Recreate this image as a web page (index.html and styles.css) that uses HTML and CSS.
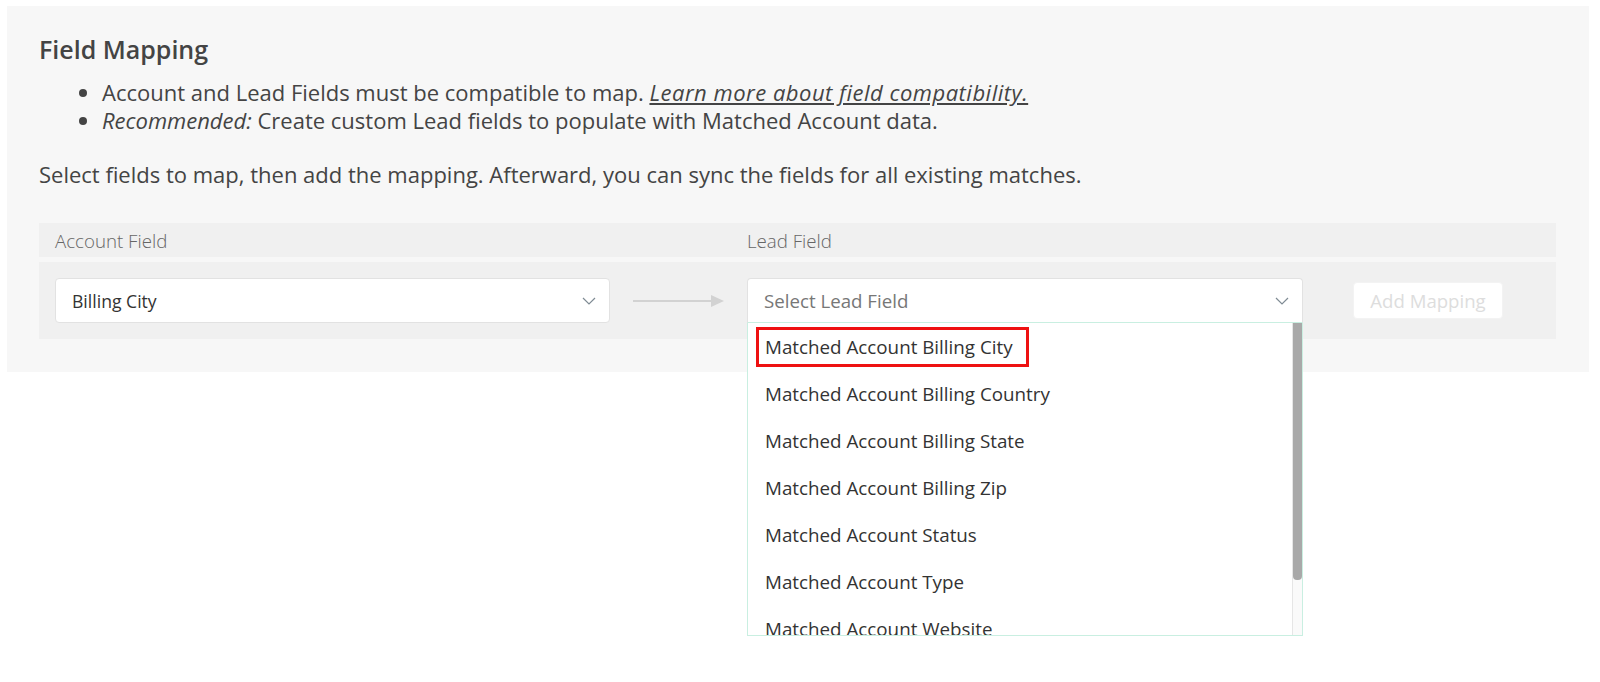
FILE: index.html
```html
<!DOCTYPE html>
<html lang="en">
<head>
    <meta charset="UTF-8">
    <meta name="viewport" content="width=device-width, initial-scale=1.0">
    <title>Field Mapping</title>
    <link rel="stylesheet" href="styles.css">
</head>
<body>
    <div class="panel">
        <h2 class="title">Field Mapping</h2>
        <ul class="notes">
            <li>Account and Lead Fields must be compatible to map. <a href="#" class="help-link">Learn more about field compatibility.</a></li>
            <li><em>Recommended:</em> Create custom Lead fields to populate with Matched Account data.</li>
        </ul>
        <p class="intro">Select fields to map, then add the mapping. Afterward, you can sync the fields for all existing matches.</p>

        <div class="mapping">
            <div class="mapping-head">
                <span class="col-label">Account Field</span>
                <span></span>
                <span class="col-label">Lead Field</span>
            </div>
            <div class="mapping-row">
                <div class="select">
                    <span class="select-value">Billing City</span>
                    <svg class="chevron" width="14" height="8" viewBox="0 0 14 8"><path d="M1 1l6 6 6-6" fill="none" stroke="#7f8b94" stroke-width="1.2"/></svg>
                </div>
                <div class="arrow">
                    <svg width="92" height="12" viewBox="0 0 92 12"><path d="M0 6h80" stroke="#d2d2d2" stroke-width="2"/><path d="M78 0l13 6-13 6z" fill="#d2d2d2"/></svg>
                </div>
                <div class="select select-open">
                    <span class="select-placeholder">Select Lead Field</span>
                    <svg class="chevron" width="14" height="8" viewBox="0 0 14 8"><path d="M1 1l6 6 6-6" fill="none" stroke="#7f8b94" stroke-width="1.2"/></svg>
                    <div class="menu">
                        <ul class="options">
                            <li class="option"><span class="marked">Matched Account Billing City</span></li>
                            <li class="option">Matched Account Billing Country</li>
                            <li class="option">Matched Account Billing State</li>
                            <li class="option">Matched Account Billing Zip</li>
                            <li class="option">Matched Account Status</li>
                            <li class="option">Matched Account Type</li>
                            <li class="option">Matched Account Website</li>
                        </ul>
                        <div class="scrollbar"><div class="thumb"></div></div>
                    </div>
                </div>
                <button class="add-btn" disabled>Add Mapping</button>
            </div>
        </div>
    </div>
</body>
</html>
```

FILE: styles.css
```css
html, body {
    min-height: 100%;
}

body {
    margin: 0;
    min-height: 682px;
    background-color: #fff;
    font-family: "Open Sans", Arial, sans-serif;
    color: #444;
}

.panel {
    margin: 6px 11px 0 7px;
    padding: 26px 33px 33px 32px;
    background-color: #f7f7f7;
}

.title {
    margin: 0;
    font-size: 25px;
    font-weight: 600;
    line-height: 34px;
    color: #444;
}

.notes {
    margin: 13px 0 0;
    padding-left: 63px;
    font-size: 22px;
    line-height: 27.5px;
}

.help-link {
    color: #444;
    font-style: italic;
    letter-spacing: 0.5px;
}

.intro {
    margin: 26px 0 0;
    font-size: 22px;
    line-height: 28px;
}

.mapping {
    margin-top: 35px;
}

.mapping-head,
.mapping-row {
    display: grid;
    grid-template-columns: 555px 137px 556px 150px;
    column-gap: 0;
    padding: 0 16px;
    background-color: #f0f0f0;
}

.mapping-head {
    height: 34px;
    align-items: center;
}

.col-label {
    font-size: 18.7px;
    font-weight: 300;
    color: #666;
}

.mapping-row {
    margin-top: 5px;
    height: 77px;
    align-items: center;
}

.select {
    position: relative;
    display: flex;
    align-items: center;
    justify-content: space-between;
    height: 45px;
    padding: 0 13px 0 16px;
    background-color: #fff;
    border: 1px solid #e2e2e2;
    border-radius: 4px;
    box-sizing: border-box;
    font-size: 18.7px;
}

.select-value {
    color: #333;
    font-size: 17.6px;
}

.select-placeholder {
    color: #777;
}

.select-open {
    border-bottom-color: #c9efe1;
    border-radius: 4px 4px 0 0;
}

.arrow {
    display: flex;
    justify-content: center;
}

.menu {
    position: absolute;
    top: 44px;
    left: -1px;
    right: -1px;
    height: 313px;
    display: flex;
    background-color: #fff;
    border: 1px solid #c9efe1;
    border-top: none;
    box-sizing: border-box;
    overflow: hidden;
    z-index: 2;
}

.options {
    flex: 1;
    margin: 0;
    padding: 0;
    list-style: none;
}

.option {
    height: 47px;
    padding-left: 17px;
    display: flex;
    align-items: center;
    font-size: 18.8px;
    color: #333;
    white-space: nowrap;
}

.marked {
    margin-left: -9px;
    padding: 4px 13px 4px 6px;
    border: 3px solid #ee1111;
}

.scrollbar {
    width: 9px;
    border-left: 1px solid #e6e6e6;
    background-color: #fafafa;
}

.thumb {
    height: 257px;
    background-color: #a9a9a9;
    border-radius: 0 0 4px 4px;
}

.add-btn {
    justify-self: end;
    width: 150px;
    height: 37px;
    margin-right: -50px;
    background-color: #fff;
    border: 1px solid #f3f3f3;
    border-radius: 4px;
    font-family: "Open Sans", Arial, sans-serif;
    font-size: 18.6px;
    color: #ddd;
}
```
